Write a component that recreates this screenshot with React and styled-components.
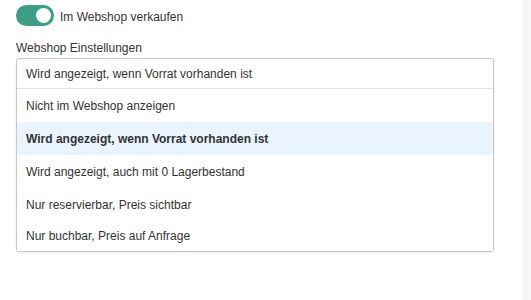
import React, { useState } from 'react'
import styled, { createGlobalStyle } from 'styled-components'

const GlobalStyle = createGlobalStyle`
  html, body {
    margin: 0;
    padding: 0;
    background: #fff;
  }
  body {
    font-family: "Liberation Sans", Arial, sans-serif;
    color: #333;
  }
`;

const Page = styled.div`
  display: flex;
  width: 531px;
  height: 300px;
`;

const Main = styled.div`
  flex: 1;
  padding: 5px 28px 0 16px;
  display: flex;
  flex-direction: column;
`;

const Scrollbar = styled.div`
  width: 9px;
  background: #f7f7f7;
`;

const ToggleRow = styled.label`
  display: flex;
  align-items: flex-start;
  gap: 6px;
  font-size: 12px;
  color: #333;
`;

const ToggleText = styled.span`
  padding-top: 5px;
  line-height: 14px;
`;

const Switch = styled.span`
  position: relative;
  width: 38px;
  height: 21px;
  border-radius: 11px;
  background: ${p => (p.on ? '#3a9f84' : '#ccc')};
  flex-shrink: 0;
  &::after {
    content: '';
    position: absolute;
    top: 3px;
    left: ${p => (p.on ? '20px' : '3px')};
    width: 15px;
    height: 15px;
    border-radius: 50%;
    background: #fff;
  }
`;

const FieldLabel = styled.div`
  margin-top: 15px;
  font-size: 12px;
  line-height: 14px;
  color: #333;
`;

const Select = styled.div`
  margin-top: 3px;
  border: 1px solid #c8c8c8;
  border-radius: 3px;
  box-shadow: 0 1px 2px rgba(0, 0, 0, 0.08);
  background: #fff;
`;

const Current = styled.div`
  height: 29px;
  display: flex;
  align-items: center;
  padding: 0 9px;
  font-size: 12px;
  border-bottom: 1px solid #e3e3e3;
`;

const Option = styled.div`
  height: 33px;
  display: flex;
  align-items: center;
  padding: 0 9px;
  font-size: 12px;
  color: #333;
  font-weight: ${p => (p.selected ? 'bold' : 'normal')};
  background: ${p => (p.selected ? '#eaf4fe' : '#fff')};
  &:last-child {
    height: 30px;
  }
`;

const options = [
  'Nicht im Webshop anzeigen',
  'Wird angezeigt, wenn Vorrat vorhanden ist',
  'Wird angezeigt, auch mit 0 Lagerbestand',
  'Nur reservierbar, Preis sichtbar',
  'Nur buchbar, Preis auf Anfrage',
]

export default function App() {
  const [value, setValue] = useState(1)
  return (
    <>
      <GlobalStyle />
      <Page>
        <Main>
          <ToggleRow>
            <Switch on />
            <ToggleText>Im Webshop verkaufen</ToggleText>
          </ToggleRow>
          <FieldLabel>Webshop Einstellungen</FieldLabel>
          <Select>
            <Current>{options[value]}</Current>
            {options.map((o, i) => (
              <Option key={o} selected={i === value} onClick={() => setValue(i)}>
                {o}
              </Option>
            ))}
          </Select>
        </Main>
        <Scrollbar />
      </Page>
    </>
  )
}
